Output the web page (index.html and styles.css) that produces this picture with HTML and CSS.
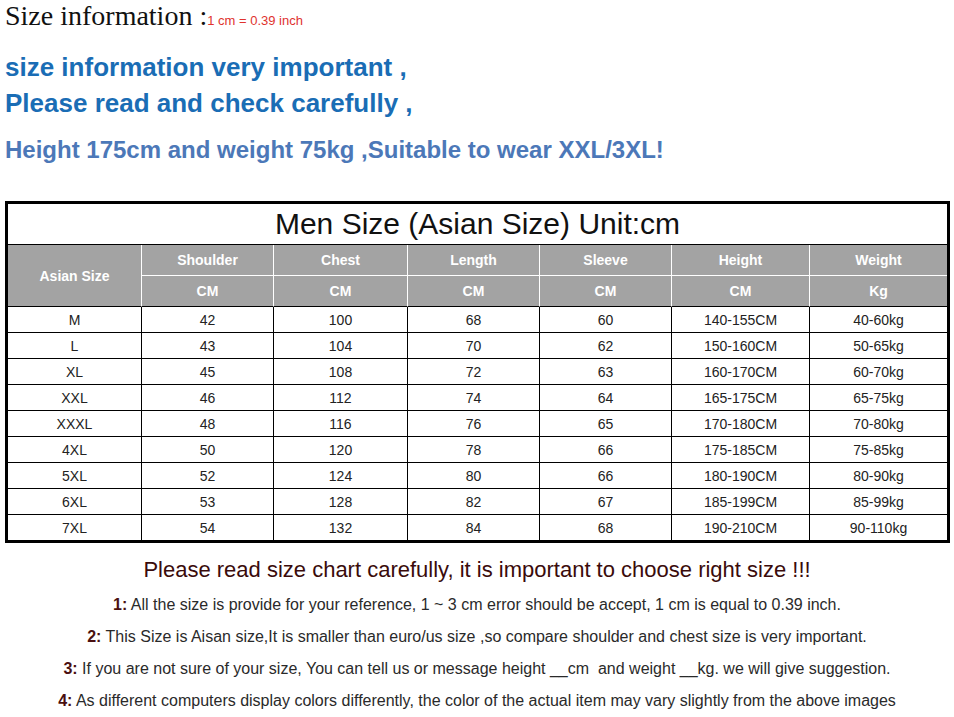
FILE: index.html
```html
<!DOCTYPE html>
<html lang="en">
<head>
<meta charset="utf-8">
<title>Size information</title>
<link rel="stylesheet" href="styles.css">
</head>
<body>
<div class="page">
  <h1 class="size-title">Size information :<span class="conv">1 cm = 0.39 inch</span></h1>
  <p class="important">size information very important ,<br>Please read and check carefully ,</p>
  <p class="example">Height 175cm and weight 75kg ,Suitable to wear XXL/3XL!</p>

  <table class="chart">
    <colgroup>
      <col class="c1"><col class="c2"><col class="c3"><col class="c4"><col class="c5"><col class="c6"><col class="c7">
    </colgroup>
    <thead>
      <tr class="caption-row"><th colspan="7" class="caption">Men Size (Asian Size) Unit:cm</th></tr>
      <tr class="h1">
        <th rowspan="2" class="asian">Asian Size</th>
        <th>Shoulder</th><th>Chest</th><th>Length</th><th>Sleeve</th><th>Height</th><th class="last">Weight</th>
      </tr>
      <tr class="h2">
        <th>CM</th><th>CM</th><th>CM</th><th>CM</th><th>CM</th><th class="last">Kg</th>
      </tr>
    </thead>
    <tbody>
      <tr><td>M</td><td>42</td><td>100</td><td>68</td><td>60</td><td>140-155CM</td><td>40-60kg</td></tr>
      <tr><td>L</td><td>43</td><td>104</td><td>70</td><td>62</td><td>150-160CM</td><td>50-65kg</td></tr>
      <tr><td>XL</td><td>45</td><td>108</td><td>72</td><td>63</td><td>160-170CM</td><td>60-70kg</td></tr>
      <tr><td>XXL</td><td>46</td><td>112</td><td>74</td><td>64</td><td>165-175CM</td><td>65-75kg</td></tr>
      <tr><td>XXXL</td><td>48</td><td>116</td><td>76</td><td>65</td><td>170-180CM</td><td>70-80kg</td></tr>
      <tr><td>4XL</td><td>50</td><td>120</td><td>78</td><td>66</td><td>175-185CM</td><td>75-85kg</td></tr>
      <tr><td>5XL</td><td>52</td><td>124</td><td>80</td><td>66</td><td>180-190CM</td><td>80-90kg</td></tr>
      <tr><td>6XL</td><td>53</td><td>128</td><td>82</td><td>67</td><td>185-199CM</td><td>85-99kg</td></tr>
      <tr><td>7XL</td><td>54</td><td>132</td><td>84</td><td>68</td><td>190-210CM</td><td>90-110kg</td></tr>
    </tbody>
  </table>

  <p class="notice">Please read size chart carefully, it is important to choose right size !!!</p>
  <ol class="notes">
    <li><b>1:</b> All the size is provide for your reference, 1 ~ 3 cm error should be accept, 1 cm is equal to 0.39 inch.</li>
    <li><b>2:</b> This Size is Aisan size,It is smaller than euro/us size ,so compare shoulder and chest size is very important.</li>
    <li><b>3:</b> If you are not sure of your size, You can tell us or message height __cm&nbsp; and weight __kg. we will give suggestion.</li>
    <li><b>4:</b> As different computers display colors differently, the color of the actual item may vary slightly from the above images</li>
  </ol>
</div>
</body>
</html>
```

FILE: styles.css
```css
* { box-sizing: border-box; }

html, body {
  margin: 0;
  padding: 0;
  background: #ffffff;
}

.page {
  width: 954px;
  padding: 0 5px;
  font-family: "Liberation Sans", Arial, sans-serif;
}

.size-title {
  margin: 0;
  font-family: "Liberation Serif", "Times New Roman", serif;
  font-weight: normal;
  font-size: 28px;
  line-height: 31px;
  color: #111111;
}

.conv {
  font-family: "Liberation Sans", Arial, sans-serif;
  font-size: 13px;
  line-height: 1;
  color: #e0322e;
}

.important {
  margin: 18px 0 0;
  font-weight: bold;
  font-size: 26px;
  line-height: 36px;
  color: #1a6db5;
}

.example {
  margin: 11px 0 0;
  font-weight: bold;
  font-size: 24px;
  line-height: 36px;
  color: #4c78b8;
}

.chart {
  margin-top: 33px;
  width: 945px;
  table-layout: fixed;
  border-collapse: separate;
  border-spacing: 0;
  border: 3px solid #000000;
}

.c1 { width: 134px; }
.c2 { width: 132px; }
.c3 { width: 134px; }
.c4 { width: 132px; }
.c5 { width: 132px; }
.c6 { width: 138px; }
.c7 { width: 137px; }

.chart th,
.chart td {
  padding: 0;
  text-align: center;
  vertical-align: middle;
  border-right: 1px solid #000000;
  border-bottom: 1px solid #000000;
}

.chart td:last-child,
.chart th.last,
.chart th.caption {
  border-right: none;
}

.chart tbody tr:last-child td {
  border-bottom: none;
}

.caption {
  height: 41px;
  font-weight: normal;
  font-size: 30px;
  color: #111111;
}

.h1 th,
.h2 th {
  height: 31px;
  background: #a3a3a3;
  color: #ffffff;
  font-weight: bold;
  font-size: 14px;
  border-right-color: #ffffff;
}

.h1 th {
  border-bottom-color: #ffffff;
}

.h1 th.asian {
  border-bottom-color: #000000;
}

.h2 th {
  border-bottom-color: #000000;
}

.chart td {
  height: 26px;
  font-size: 14px;
  color: #222222;
}

.chart tbody tr:last-child td {
  height: 25px;
}

.notice {
  margin: 11px 0 0;
  text-align: center;
  font-size: 22px;
  line-height: 32px;
  color: #3a0b0b;
}

.notes {
  list-style: none;
  margin: 3px 0 0;
  padding: 0;
  text-align: center;
  font-size: 16px;
  line-height: 32px;
  color: #2a2a2a;
}

.notes b {
  color: #4a1010;
}
```
